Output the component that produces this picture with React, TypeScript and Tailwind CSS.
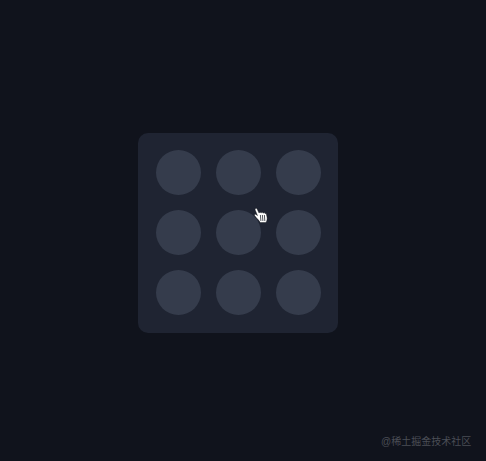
export default function App() {
  const dots = [1, 2, 3, 4, 5, 6, 7, 8, 9];

  return (
    <div className="relative w-full h-[461px] overflow-hidden bg-[#10131c] pt-[133px] pl-[138px]">
      <div className="w-[200px] h-[200px] rounded-[10px] bg-[#1f2432] grid grid-cols-3 content-start gap-[15px] px-[17.5px] pt-[16.5px]">
        {dots.map((d) => (
          <div key={d} className="w-[45px] h-[45px] rounded-full bg-[#353c4c]" />
        ))}
      </div>

      {/* hand cursor */}
      <svg className="absolute left-[254px] top-[207px]" width="14" height="16" viewBox="0 0 14 16">
        <path
          d="M1.200 2C1.500 1 2.700 1 3.100 1.900L5 6 6.200 5C6.600 5.600 6.800 5.800 7 6.100L8.200 5C8.600 5.500 8.800 5.800 9 6.200L10.200 5.400C10.600 5.800 10.800 6.200 11 6.600L12.200 6.400 13 10C13.400 12 13 13.800 12 15.400L6.200 15.600C5.600 14 4.500 12.900 3.200 11.800L.6 8.600C.2 7.800 1 7.100 1.900 7.400L3.500 8.600 1.400 3.600C1.100 3 1 2.500 1.200 2Z"
          fill="#ffffff"
          stroke="#0b0d12"
          strokeWidth="0.4"
        />
        <path d="M6.400 8L6.900 14M8.400 8L8.900 14M10.400 8L10.800 14" stroke="#2a2d36" strokeWidth="0.8" />
      </svg>

      <span className="absolute left-[381px] top-[435px] text-[10px] leading-[14px] text-[#4a4d55] font-['Liberation_Sans','Noto_Sans_CJK_SC',sans-serif]">
        @稀土掘金技术社区
      </span>
    </div>
  );
}
